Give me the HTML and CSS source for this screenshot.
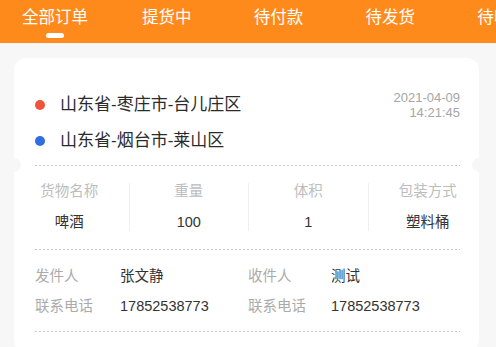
FILE: index.html
```html
<!DOCTYPE html>
<html lang="zh-CN">
<head>
  <meta charset="UTF-8">
  <title>订单列表</title>
  <meta name="viewport" content="width=device-width, initial-scale=1.0">
  <link rel="stylesheet" href="styles.css">
</head>
<body>
  <nav class="tabs">
    <div class="tab active"><span class="tab-label">全部订单</span><i class="tab-bar"></i></div>
    <div class="tab"><span class="tab-label">提货中</span></div>
    <div class="tab"><span class="tab-label">待付款</span></div>
    <div class="tab"><span class="tab-label">待发货</span></div>
    <div class="tab"><span class="tab-label">待收货</span></div>
  </nav>

  <div class="order-card">
    <div class="route">
      <div class="places">
        <div class="place"><i class="dot dot-from"></i>山东省-枣庄市-台儿庄区</div>
        <div class="place"><i class="dot dot-to"></i>山东省-烟台市-莱山区</div>
      </div>
      <div class="time">2021-04-09<br>14:21:45</div>
    </div>

    <div class="split notched"></div>

    <div class="goods">
      <div class="goods-col">
        <div class="goods-label">货物名称</div>
        <div class="goods-value">啤酒</div>
      </div>
      <div class="goods-col">
        <div class="goods-label">重量</div>
        <div class="goods-value">100</div>
      </div>
      <div class="goods-col">
        <div class="goods-label">体积</div>
        <div class="goods-value">1</div>
      </div>
      <div class="goods-col">
        <div class="goods-label">包装方式</div>
        <div class="goods-value">塑料桶</div>
      </div>
    </div>

    <div class="split"></div>

    <div class="people">
      <span class="people-label">发件人</span>
      <span class="people-value">张文静</span>
      <span class="people-label">收件人</span>
      <span class="people-value">测试</span>
      <span class="people-label">联系电话</span>
      <span class="people-value">17852538773</span>
      <span class="people-label">联系电话</span>
      <span class="people-value">17852538773</span>
    </div>

    <div class="split"></div>
    <div class="more"></div>
  </div>
</body>
</html>
```

FILE: styles.css
```css
* {
  box-sizing: border-box;
}
body {
  margin: 0;
  font-family: 'Liberation Sans', 'Noto Sans CJK SC', sans-serif;
  background: #f7f7f7;
  color: #333;
  overflow: hidden;
}
.tabs {
  display: flex;
  height: 43px;
  background: #ff8a1c;
  white-space: nowrap;
  overflow: hidden;
  margin-left: -1px;
}
.tab {
  flex: 0 0 111.75px;
  text-align: center;
  color: #fff;
}
.tab-label {
  display: block;
  font-size: 16.5px;
  line-height: 34px;
}
.tab-bar {
  display: block;
  width: 18px;
  height: 5px;
  margin: -1px auto 0;
  border-radius: 3px;
  background: #fff;
}
.order-card {
  margin: 15px 17px 0 14px;
  background: #fff;
  border-radius: 12px;
  padding: 29px 19px 0 21px;
}
.route {
  display: flex;
  justify-content: space-between;
  align-items: flex-start;
  padding-bottom: 6px;
}
.place {
  display: flex;
  align-items: center;
  font-size: 17px;
  line-height: 36px;
  color: #2b2b2b;
}
.dot {
  width: 10px;
  height: 10px;
  border-radius: 50%;
  margin-right: 15px;
}
.dot-from {
  background: #ef5339;
}
.dot-to {
  background: #2f6de0;
}
.time {
  margin-top: 3px;
  font-size: 13px;
  line-height: 15px;
  color: #a6a6a6;
  text-align: right;
}
.split {
  height: 1px;
  background: repeating-linear-gradient(to right, #c9c9c9 0 2px, transparent 2px 4px);
}
.notched {
  position: relative;
}
.notched::before,
.notched::after {
  content: '';
  position: absolute;
  top: -7px;
  width: 14px;
  height: 14px;
  border-radius: 50%;
  background: #f7f7f7;
}
.notched::before {
  left: -28px;
}
.notched::after {
  right: -26px;
}
.goods {
  display: flex;
  margin: 0 -27px 0 -25px;
  padding: 17px 0 18px;
}
.goods-col {
  flex: 1;
  text-align: center;
  font-size: 14.5px;
  line-height: 17px;
}
.goods-col + .goods-col {
  border-left: 1px solid #efefef;
}
.goods-label {
  color: #bdbdbd;
}
.goods-value {
  margin-top: 13.5px;
  padding-bottom: 0.5px;
  color: #333;
}
.people {
  display: grid;
  grid-template-columns: 85px 128px 83px auto;
  padding: 11px 0 10px;
  font-size: 14.5px;
  line-height: 30px;
}
.people-label {
  color: #ababab;
}
.people-value {
  color: #333;
}
.more {
  height: 20px;
}
```
